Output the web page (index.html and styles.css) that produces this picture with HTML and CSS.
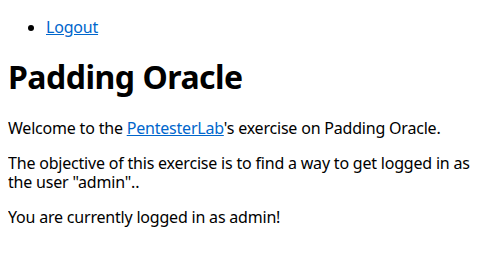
FILE: index.html
```html
<!DOCTYPE html>
<html>
<head>
  <meta charset="UTF-8">
  <title>PentesterLab &raquo; Padding Oracle</title>
  <link rel="stylesheet" href="styles.css">
</head>
<body>
  <ul class="nav">
    <li><a href="/logout">Logout</a></li>
  </ul>
  <h1>Padding Oracle</h1>
  <p>Welcome to the <a href="https://pentesterlab.com">PentesterLab</a>'s exercise on Padding Oracle.</p>
  <p>The objective of this exercise is to find a way to get logged in as the user "admin"..</p>
  <p>You are currently logged in as admin!</p>
</body>
</html>
```

FILE: styles.css
```css
body {
  font-family: "Noto Sans", sans-serif;
  font-size: 16px;
  line-height: 19px;
  letter-spacing: -0.2px;
  color: #000;
  background-color: #fff;
}

.nav {
  margin-top: 10px;
  padding-left: 38px;
}

h1 {
  line-height: 38px;
  letter-spacing: -0.5px;
  margin-bottom: 23px;
}

a {
  color: #0066cc;
}
```
